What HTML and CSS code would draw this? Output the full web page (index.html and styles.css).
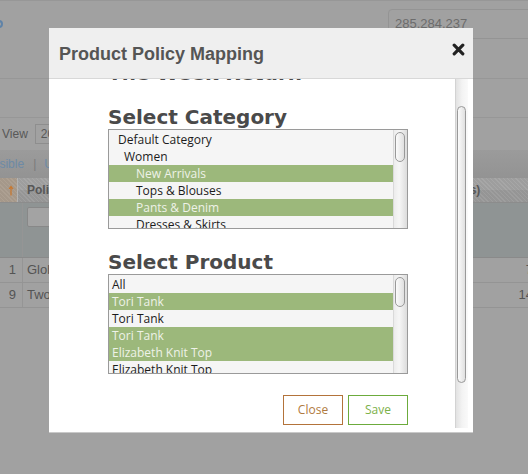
FILE: index.html
```html
<!DOCTYPE html>
<html lang="en">
<head>
<meta charset="utf-8">
<title>Product Policy Mapping</title>
<link rel="stylesheet" href="styles.css">
</head>
<body>
<div class="page">
  <div class="topbar">
    <span class="brand-dot"></span>
    <div class="search">285.284.237</div>
  </div>
  <div class="subbar"></div>
  <div class="toolbar">
    <span class="view-label">View</span>
    <span class="view-select">20</span>
  </div>
  <div class="linksbar">
    <span class="link cut">Visible</span>
    <span class="sep">|</span>
    <span class="link">Unselect All</span>
  </div>
  <div class="grid">
    <div class="grid-head">
      <div class="sort-cell">
        <svg width="6" height="11" viewBox="0 0 6 11"><path d="M3 1.5V10.5M1 4L3 1.5L5 4" fill="none" stroke="#c9762c" stroke-width="1.2"/></svg>
      </div>
      <div class="head-policy">Policy Name</div>
      <div class="head-count">No. of Product(s)</div>
    </div>
    <div class="grid-filter">
      <div class="num-cell"></div>
      <div class="filter-cell"><span class="filter-input"></span></div>
    </div>
    <div class="grid-row">
      <div class="num-cell">1</div>
      <div class="name-cell">Global Policy</div>
      <div class="qty-cell">7</div>
    </div>
    <div class="grid-row">
      <div class="num-cell">9</div>
      <div class="name-cell">Two Week Return</div>
      <div class="qty-cell">14</div>
    </div>
  </div>
</div>

<div class="modal">
  <div class="modal-header">
    <h2 class="modal-title">Product Policy Mapping</h2>
    <button class="close-x" type="button" aria-label="Close">
      <svg width="13" height="13" viewBox="0 0 13 13"><path d="M2.2 2.2L10.8 10.8M10.8 2.2L2.2 10.8" stroke="#222" stroke-width="3.2" stroke-linecap="round"/></svg>
    </button>
  </div>
  <div class="modal-body">
    <div class="scroll-area">
      <div class="scroll-content">
        <h3 class="section-title intro">The Week Return</h3>
        <h3 class="section-title">Select Category</h3>
        <div class="listbox">
          <ul class="options">
            <li class="lvl0">Default Category</li>
            <li class="lvl1">Women</li>
            <li class="lvl2 selected">New Arrivals</li>
            <li class="lvl2">Tops &amp; Blouses</li>
            <li class="lvl2 selected">Pants &amp; Denim</li>
            <li class="lvl2">Dresses &amp; Skirts</li>
          </ul>
          <div class="mini-scroll"><span class="thumb"></span></div>
        </div>
        <h3 class="section-title spaced">Select Product</h3>
        <div class="listbox">
          <ul class="options">
            <li>All</li>
            <li class="selected">Tori Tank</li>
            <li>Tori Tank</li>
            <li class="selected">Tori Tank</li>
            <li class="selected">Elizabeth Knit Top</li>
            <li>Elizabeth Knit Top</li>
          </ul>
          <div class="mini-scroll"><span class="thumb"></span></div>
        </div>
        <div class="actions">
          <button class="btn btn-close" type="button">Close</button>
          <button class="btn btn-save" type="button">Save</button>
        </div>
      </div>
    </div>
    <div class="scrollbar"><span class="thumb"></span></div>
  </div>
</div>
</body>
</html>
```

FILE: styles.css
```css
* { box-sizing: border-box; }
html, body { margin: 0; height: 100%; }
body {
  background: #a1a1a1;
  font-family: "Liberation Sans", Arial, sans-serif;
  overflow: hidden;
  position: relative;
}

/* ---------- background page (dimmed) ---------- */
.page { width: 538px; }
.topbar {
  height: 79px;
  border-top: 1px solid #979797;
  border-bottom: 1px solid #979797;
  display: flex;
  justify-content: space-between;
  align-items: flex-start;
  padding-top: 8px;
}
.brand-dot {
  width: 8px; height: 8px;
  margin: 11px 0 0 -5px;
  border: 2px solid #5f83a8;
  border-radius: 50%;
}
.search {
  width: 150px; height: 30px;
  border: 1px solid #949494;
  border-radius: 4px;
  padding-left: 6px;
  font-size: 13px;
  line-height: 27px;
  color: #6c6c6c;
}
.subbar { height: 39px; border-bottom: 1px solid #979797; }
.toolbar {
  height: 32px;
  display: flex;
  align-items: flex-start;
  padding: 6px 0 0 2px;
  font-size: 12px;
  color: #585858;
}
.view-label { line-height: 20px; margin-right: 7px; }
.view-select {
  width: 40px; height: 20px;
  border: 1px solid #8e8e8e;
  padding-left: 5px;
  line-height: 18px;
}
.linksbar {
  height: 28px;
  background: linear-gradient(#9b9b9b, #939393);
  display: flex;
  align-items: center;
  font-size: 12px;
}
.link { color: #6d8aa6; }
.link.cut { margin-left: -11px; }
.sep { color: #7a7a7a; margin: 0 8px 0 9px; }

.grid { font-size: 13px; color: #545454; }
.grid-head {
  height: 25px;
  display: flex;
  border-bottom: 1px solid #8c8c8c;
  background:
    linear-gradient(rgba(255,255,255,0.04) 0 12px, rgba(0,0,0,0.03) 12px),
    repeating-linear-gradient(45deg, #a3a3a3 0 1px, #9a9a9a 1px 3px);
  font-weight: bold;
  font-size: 12px;
  line-height: 24px;
  color: #575757;
}
.sort-cell {
  width: 18px;
  border-right: 1px solid #b3b3b3;
  background: repeating-linear-gradient(45deg, #ada092 0 1px, #a5988a 1px 3px);
  display: flex;
  justify-content: center;
  align-items: center;
  padding-left: 4px;
}
.head-policy { width: 358px; padding-left: 9px; }
.head-count { flex: 1; padding-left: 7px; }
.grid-filter {
  height: 55px;
  display: flex;
  background: #8f9494;
  border-bottom: 1px solid #8a8a8a;
}
.num-cell {
  width: 23px;
  border-right: 1px solid #959595;
  text-align: right;
  padding-right: 6px;
}
.filter-cell { flex: 1; padding: 4px 0 0 4px; }
.filter-input {
  display: block;
  width: 120px; height: 20px;
  border: 1px solid #888;
  border-radius: 2px;
  background: #a3a3a3;
}
.grid-row {
  height: 25px;
  display: flex;
  border-bottom: 1px solid #949494;
  line-height: 24px;
}
.name-cell { width: 353px; padding-left: 4px; white-space: nowrap; }
.qty-cell { flex: 1; text-align: right; padding-right: 5px; }

/* ---------- modal ---------- */
.modal {
  position: absolute;
  left: 49px; top: 28px;
  width: 424px;
  background: #fff;
  box-shadow: 0 1px 0 #c9c9c9;
}
.modal-header {
  height: 51px;
  background: #efefef;
  border-bottom: 1px solid #d8d8d8;
  display: flex;
  justify-content: space-between;
  align-items: flex-start;
  padding: 15px 8px 0 10px;
}
.modal-title {
  margin: 0;
  font: bold 18px/22px "Liberation Sans", Arial, sans-serif;
  color: #555;
}
.close-x {
  border: 0; background: none; padding: 0; margin: 0;
  display: block; line-height: 0;
}
.modal-body {
  height: 353px;
  display: flex;
  padding: 0 5px 4px 0;
}
.scroll-area { flex: 1; overflow: hidden; }
.scroll-content { margin-top: -17px; padding-left: 59px; }
.section-title {
  margin: 0;
  font: bold 20px/23px "DejaVu Sans", sans-serif;
  color: #4a4a4a;
  white-space: nowrap;
}
.section-title.intro { margin-bottom: 21px; }
.section-title.spaced { margin-top: 22px; }

.listbox {
  width: 300px; height: 100px;
  border: 1px solid #9a9a9a;
  background: #f5f5f5;
  display: flex;
}
.options {
  list-style: none;
  margin: 0;
  padding: 1px 0 0;
  flex: 1;
  overflow: hidden;
  font: 12px/17px "Open Sans", sans-serif;
  color: #1c1c1c;
}
.options li { height: 17px; padding-left: 3px; white-space: nowrap; }
.options li.lvl0 { padding-left: 9px; }
.options li.lvl1 { padding-left: 15px; }
.options li.lvl2 { padding-left: 27px; }
.options li.selected { background: #9cb87b; color: #eef2e8; }

.mini-scroll {
  width: 14px;
  border-left: 1px solid #dadada;
  background: linear-gradient(to right, #ececec, #f6f6f6 40%, #dcdcdc);
  padding: 2px 2px 0 1px;
}
.thumb {
  display: block;
  border: 1px solid #999;
  border-radius: 5px;
  background: linear-gradient(to right, #fbfbfb, #e0e0e0);
}
.mini-scroll .thumb { height: 30px; }

.scrollbar {
  width: 13px;
  border-left: 1px solid #d3d3d3;
  background: linear-gradient(to right, #e2e2e2, #f3f3f3 50%, #fafafa);
  padding: 27px 2px 0 1px;
}
.scrollbar .thumb { height: 277px; }

.actions {
  width: 300px;
  margin-top: 21px;
  display: flex;
  justify-content: flex-end;
  gap: 5px;
}
.btn {
  width: 60px; height: 30px;
  padding: 0;
  background: #fff;
  border: 1px solid;
  border-radius: 0;
  font: 12px/28px "Open Sans", sans-serif;
}
.btn-close { border-color: #b3733a; color: #b07a40; }
.btn-save { border-color: #6cab3c; color: #7cb14a; }
```
